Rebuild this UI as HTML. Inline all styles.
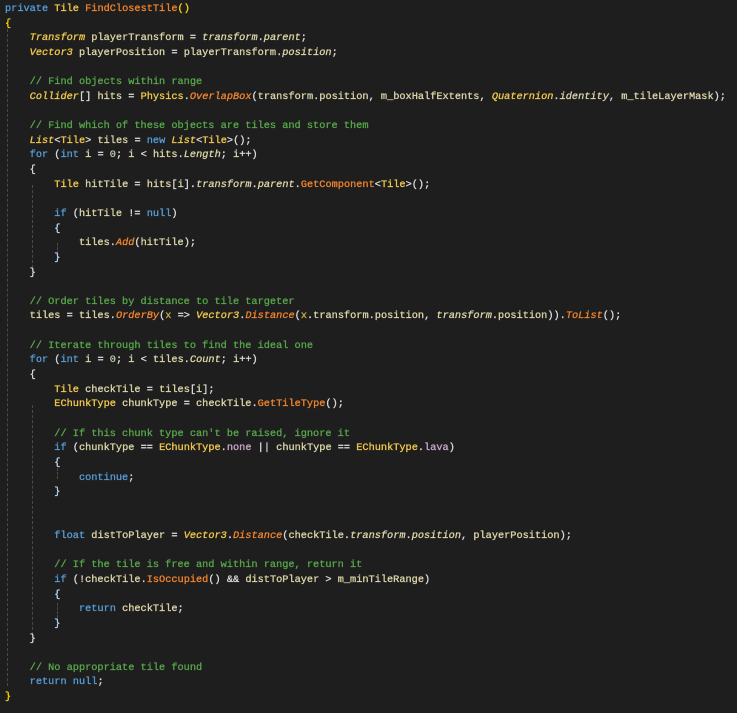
<!DOCTYPE html>
<html><head><meta charset="utf-8"><style>
html,body{margin:0;padding:0;background:#1e1e1e;width:737px;height:713px;overflow:hidden}
pre{position:absolute;left:5px;top:2px;margin:0;font-family:"Liberation Mono",monospace;font-size:10.28px;line-height:14.64px;color:#dcdcdc;-webkit-text-stroke:0.3px currentColor}
.k{color:#569cd6}.t{color:#f2c94c}.ti{color:#f2c94c;font-style:italic}.m{color:#f0842e}.mi{color:#f0842e;font-style:italic}
.c{color:#57a64a}.v{color:#dcd6a8}.p{color:#dcd6a8;font-style:italic}.n{color:#b5cea8}.e{color:#c8a8c8}.b1{color:#ffd700}.b2{color:#d8d8e8}.b3{color:#b8d8f8}.x{color:#c8a848}
.g{position:absolute;width:0;border-left:1px dashed #4a4a4a}
</style></head><body>
<div class="g" style="left:7px;top:24px;height:662px"></div>
<div class="g" style="left:32px;top:185px;height:88px"></div>
<div class="g" style="left:32px;top:405px;height:235px"></div>
<div class="g" style="left:57px;top:243px;height:15px"></div>
<div class="g" style="left:57px;top:464px;height:15px"></div>
<div class="g" style="left:57px;top:603px;height:15px"></div>
<pre><span class="k">private</span> <span class="t">Tile</span> <span class="m">FindClosestTile</span><span class="b1">()</span>
<span class="b1">{</span>
    <span class="ti">Transform</span> <span class="v">playerTransform</span> = <span class="p">transform</span>.<span class="p">parent</span>;
    <span class="ti">Vector3</span> <span class="v">playerPosition</span> = <span class="v">playerTransform</span>.<span class="p">position</span>;

    <span class="c">// Find objects within range</span>
    <span class="ti">Collider</span>[] <span class="v">hits</span> = <span class="t">Physics</span>.<span class="mi">OverlapBox</span>(<span class="v">transform</span>.<span class="v">position</span>, <span class="v">m_boxHalfExtents</span>, <span class="ti">Quaternion</span>.<span class="p">identity</span>, <span class="v">m_tileLayerMask</span>);

    <span class="c">// Find which of these objects are tiles and store them</span>
    <span class="ti">List</span>&lt;<span class="t">Tile</span>&gt; <span class="v">tiles</span> = <span class="k">new</span> <span class="ti">List</span>&lt;<span class="t">Tile</span>&gt;();
    <span class="k">for</span> (<span class="k">int</span> <span class="v">i</span> = <span class="n">0</span>; <span class="v">i</span> &lt; <span class="v">hits</span>.<span class="p">Length</span>; <span class="v">i</span>++)
    <span class="b2">{</span>
        <span class="t">Tile</span> <span class="v">hitTile</span> = <span class="v">hits</span>[<span class="v">i</span>].<span class="p">transform</span>.<span class="p">parent</span>.<span class="m">GetComponent</span>&lt;<span class="t">Tile</span>&gt;();

        <span class="k">if</span> (<span class="v">hitTile</span> != <span class="k">null</span>)
        <span class="b3">{</span>
            <span class="v">tiles</span>.<span class="mi">Add</span>(<span class="v">hitTile</span>);
        <span class="b3">}</span>
    <span class="b2">}</span>

    <span class="c">// Order tiles by distance to tile targeter</span>
    <span class="v">tiles</span> = <span class="v">tiles</span>.<span class="mi">OrderBy</span>(<span class="x">x</span> =&gt; <span class="ti">Vector3</span>.<span class="mi">Distance</span>(<span class="x">x</span>.<span class="v">transform</span>.<span class="v">position</span>, <span class="p">transform</span>.<span class="v">position</span>)).<span class="mi">ToList</span>();

    <span class="c">// Iterate through tiles to find the ideal one</span>
    <span class="k">for</span> (<span class="k">int</span> <span class="v">i</span> = <span class="n">0</span>; <span class="v">i</span> &lt; <span class="v">tiles</span>.<span class="p">Count</span>; <span class="v">i</span>++)
    <span class="b2">{</span>
        <span class="t">Tile</span> <span class="v">checkTile</span> = <span class="v">tiles</span>[<span class="v">i</span>];
        <span class="t">EChunkType</span> <span class="v">chunkType</span> = <span class="v">checkTile</span>.<span class="m">GetTileType</span>();

        <span class="c">// If this chunk type can't be raised, ignore it</span>
        <span class="k">if</span> (<span class="v">chunkType</span> == <span class="t">EChunkType</span>.<span class="e">none</span> || <span class="v">chunkType</span> == <span class="t">EChunkType</span>.<span class="e">lava</span>)
        <span class="b3">{</span>
            <span class="k">continue</span>;
        <span class="b3">}</span>


        <span class="k">float</span> <span class="v">distToPlayer</span> = <span class="ti">Vector3</span>.<span class="mi">Distance</span>(<span class="v">checkTile</span>.<span class="p">transform</span>.<span class="p">position</span>, <span class="v">playerPosition</span>);

        <span class="c">// If the tile is free and within range, return it</span>
        <span class="k">if</span> (!<span class="v">checkTile</span>.<span class="m">IsOccupied</span>() &amp;&amp; <span class="v">distToPlayer</span> &gt; <span class="v">m_minTileRange</span>)
        <span class="b3">{</span>
            <span class="k">return</span> <span class="v">checkTile</span>;
        <span class="b3">}</span>
    <span class="b2">}</span>

    <span class="c">// No appropriate tile found</span>
    <span class="k">return</span> <span class="k">null</span>;
<span class="b1">}</span></pre>
</body></html>
